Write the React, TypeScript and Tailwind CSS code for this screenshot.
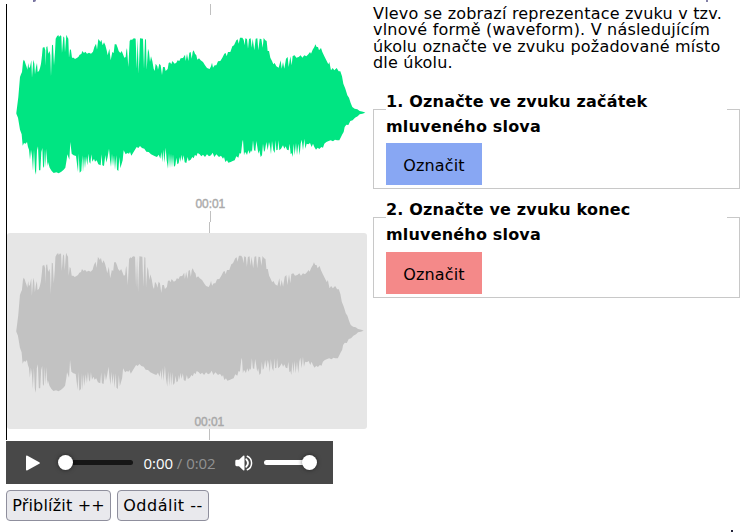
import React from "react";

// Envelope samples as flat x,y pairs, three units to a pixel.
const upper: number[] = [
  50,337,56,290,61,230,64,222,67,215,70,185,72,178,75,182,78,192,81,200,83,208,86,188,88,203,91,200,95,180,97,232,101,178,104,190,106,222,109,200,112,188,114,215,118,212,121,203,124,190,127,165,129,142,134,140,137,150,138,196,140,140,143,138,146,160,150,152,152,165,154,228,157,133,160,135,163,195,166,155,168,115,172,108,176,104,178,110,182,105,185,108,187,158,191,108,194,112,196,156,200,103,204,112,206,115,208,172,211,146,214,150,217,172,222,172,226,176,230,174,236,170,240,163,245,161,248,152,253,158,257,154,262,160,268,157,274,160,280,154,284,140,289,130,292,148,296,116,299,120,302,125,305,118,309,135,313,126,317,135,321,150,324,165,329,145,333,180,338,155,342,158,345,132,350,132,354,142,357,152,362,158,366,152,370,162,374,172,378,170,380,150,382,143,386,200,390,122,394,117,397,120,399,116,403,114,408,115,411,205,414,114,417,220,421,114,430,115,433,205,436,116,439,118,441,208,445,145,448,155,451,185,454,168,458,182,462,205,465,212,468,190,473,198,475,208,479,190,483,195,487,224,490,200,495,200,498,212,504,206,507,188,511,186,515,192,518,182,525,190,530,187,534,180,539,182,
  543,174,550,173,556,163,558,182,562,160,566,182,569,157,573,155,576,175,579,155,582,150,586,160,590,165,593,178,598,174,603,180,610,185,616,195,622,203,630,206,634,198,637,187,640,202,645,195,650,195,655,183,662,182,668,172,674,160,678,158,681,168,685,155,692,155,698,138,703,135,710,120,714,117,717,130,721,112,728,112,732,118,735,135,737,114,742,116,745,145,748,116,753,114,756,142,759,115,764,150,768,115,773,114,776,150,780,115,785,116,789,142,792,113,797,120,801,122,804,152,808,152,812,172,817,182,821,192,825,188,830,198,837,202,843,180,846,205,850,185,854,205,859,175,864,170,867,200,872,168,876,195,879,167,885,165,890,172,897,170,903,165,908,172,914,165,920,168,926,162,931,155,934,160,939,148,944,140,947,132,951,140,955,140,958,150,964,143,968,155,974,168,980,180,986,192,989,185,994,210,999,203,1004,210,1011,203,1017,213,1022,213,1027,228,1031,250,1037,265,1043,285,1048,292,1053,308,1058,320,1065,325,1073,327,1080,332,1090,334,1097,337,
];
const lower: number[] = [
  50,340,55,352,58,370,61,388,66,402,69,436,73,428,78,430,82,425,85,440,88,448,91,478,94,448,97,468,100,512,103,448,106,512,109,523,112,450,115,438,118,510,122,510,125,455,128,443,130,498,133,503,136,446,138,500,141,445,143,498,145,485,150,502,156,512,162,518,170,516,177,519,185,514,192,508,197,502,201,478,203,462,206,470,209,478,212,425,216,460,222,465,229,467,232,492,235,515,237,460,240,517,245,512,248,465,250,515,253,468,256,504,259,468,263,495,266,460,269,485,272,490,275,462,278,484,283,475,286,484,291,480,296,492,303,495,306,462,308,495,313,497,317,464,320,487,324,470,328,445,331,478,334,500,337,460,340,498,343,465,346,508,350,465,352,508,356,512,359,470,362,504,366,490,369,480,372,450,378,462,383,458,388,460,391,455,395,466,400,458,405,450,411,440,416,443,421,437,427,443,434,445,440,454,447,455,454,462,460,465,466,468,472,470,477,463,482,475,485,455,488,486,491,448,494,488,498,442,501,480,505,505,508,458,511,504,514,460,517,502,520,462,523,500,527,495,530,472,533,492,537,489,
  540,470,542,485,545,463,548,482,552,465,555,486,560,488,564,470,567,482,573,478,578,470,582,474,586,463,590,468,594,458,600,462,605,468,610,463,616,470,622,462,628,468,634,465,639,457,644,470,650,462,658,470,664,466,670,475,673,470,677,485,682,480,686,487,693,485,699,482,705,480,710,468,716,472,720,458,724,460,728,425,730,418,733,465,736,455,739,458,742,464,746,450,750,460,754,450,757,455,760,420,763,450,767,452,770,422,773,440,776,460,779,450,783,470,787,465,790,430,793,455,796,450,800,425,804,450,808,425,811,438,814,462,817,422,821,450,825,458,828,420,830,450,834,448,836,420,839,450,844,445,850,435,854,445,858,438,862,448,867,450,870,430,873,462,876,458,879,470,882,430,885,465,889,428,892,465,896,430,900,465,903,430,906,418,910,450,914,415,917,445,921,430,926,432,931,428,936,440,940,430,944,440,949,448,954,442,959,446,965,440,970,442,974,430,980,425,987,422,993,420,1000,423,1006,418,1012,420,1019,420,1024,410,1028,402,1032,395,1035,380,1040,373,1046,374,1052,362,1059,360,1066,352,1074,348,1080,342,1088,340,1097,337,
];

function toPairs(flat: number[]): string[] {
  const pairs: string[] = [];
  for (let i = 0; i < flat.length; i += 2) pairs.push(`${flat[i]},${flat[i + 1]}`);
  return pairs;
}

const envelope = [...toPairs(upper), ...toPairs(lower).reverse()].join(" ");

function Waveform({ className, viewBox }: { className: string; viewBox: string }) {
  return (
    <svg className={className} viewBox={viewBox} preserveAspectRatio="none">
      <polygon points={envelope} />
    </svg>
  );
}

function Tick({ className }: { className: string }) {
  return <div className={`w-px bg-[#c0c0c0] ${className}`} />;
}

function TimeLabel({ className }: { className: string }) {
  return (
    <div className={`font-['Liberation_Sans',sans-serif] text-[12px] leading-[12px] tracking-[-0.1px] [-webkit-text-stroke:0.4px_currentColor] ${className}`}>
      00:01
    </div>
  );
}

function Player() {
  return (
    <div className="flex h-[43px] w-[327px] items-center bg-[#484848]">
      <svg className="ml-5 h-4 w-[14px] shrink-0 fill-white" viewBox="0 0 14 16">
        <path d="M0 1.5Q0 0 1.5.7L13.3 7.2Q14.5 8 13.3 8.8L1.5 15.3Q0 16 0 14.5Z" />
      </svg>
      <div className="ml-[17.5px] flex w-[75.5px] shrink-0 items-center">
        <div className="z-10 h-[15px] w-[15px] shrink-0 rounded-full bg-white shadow-[0_0_4px_rgba(0,0,0,0.5)]" />
        <div className="-ml-1 h-[5px] grow rounded-r-full bg-[#161616]" />
      </div>
      <div className="ml-[10.5px] w-[75px] shrink-0 whitespace-nowrap pt-px font-['Open_Sans',sans-serif] text-[15px] leading-5 tracking-[-0.05px] text-[#929292]">
        <span className="text-white">0:00</span> / 0:02
      </div>
      <svg className="ml-4 h-4 w-[18px] shrink-0" viewBox="0 0 18 16" fill="none">
        <path d="M1.5 4.8H4L8.2.8Q9.5 0 9.5 1.5V14.5Q9.5 16 8.2 15.2L4 11.2H1.5Q.3 11.2.3 9.8V6.2Q.3 4.8 1.5 4.8Z" fill="#fff" />
        <path d="M11.3 4.3Q14.6 8 11.3 11.7" stroke="#fff" strokeWidth="1.9" strokeLinecap="round" />
        <path d="M12.3 1.3C18 3.8 18 12.2 12.3 14.7" stroke="#fff" strokeWidth="1.5" strokeLinecap="round" />
      </svg>
      <div className="ml-[11px] flex w-[53px] shrink-0 items-center">
        <div className="-mr-1 h-[5px] grow rounded-l-full bg-white" />
        <div className="h-[15px] w-[15px] shrink-0 rounded-full bg-white shadow-[0_0_4px_rgba(0,0,0,0.5)]" />
      </div>
    </div>
  );
}

function ZoomButton({ children, className }: { children: React.ReactNode; className: string }) {
  return (
    <button className={`flex h-[31px] items-center justify-center whitespace-nowrap rounded border border-[#8f8f9d] bg-[#e9e9ed] pt-px text-[16px] ${className}`}>
      {children}
    </button>
  );
}

interface TaskProps {
  title: React.ReactNode;
  className: string;
  legendClass: string;
  buttonClass: string;
}

function Task({ title, className, legendClass, buttonClass }: TaskProps) {
  return (
    <fieldset className={`w-[367px] border border-[#c8c8c8] px-3 ${className}`}>
      <legend className={`w-full text-[16px] font-bold leading-[24.5px] tracking-[0.18px] ${legendClass}`}>{title}</legend>
      <button className={`flex h-[42px] w-24 items-center justify-center pt-[3px] text-[16px] tracking-[0.15px] ${buttonClass}`}>
        Označit
      </button>
    </fieldset>
  );
}

export default function App() {
  return (
    <div className="relative flex h-[532px] w-[753px] overflow-hidden bg-white font-['DejaVu_Sans',Verdana,sans-serif] text-black">
      <div className="ml-[6px] w-[361px] shrink-0 pt-1">
        <div className="h-[437px]">
          <div className="h-[436px] border-l border-black">
            <Tick className="ml-[203px] h-[11px]" />
            <Waveform className="block h-[180px] w-[360px] fill-[#00e582]" viewBox="22 44 1080 540" />
            <TimeLabel className="ml-[188.5px] mt-[3px] text-[#aaaaaa]" />
            <Tick className="ml-[203px] mt-px h-[11px]" />
            <Tick className="ml-[202px] h-[11px]" />
            <div className="h-[196px] overflow-hidden rounded-[3px] bg-[#e6e6e6]">
              <Waveform className="block h-[180px] w-[360px] fill-[#c2c2c2]" viewBox="22 44 1085 540" />
              <TimeLabel className="ml-[187.5px] mt-[3px] text-[#a8a8a8]" />
            </div>
            <Tick className="ml-[202px] h-[11px]" />
          </div>
        </div>
        <Player />
        <div className="mt-[6px] flex gap-[6px]">
          <ZoomButton className="w-[105px] tracking-[0.18px]">Přiblížit ++</ZoomButton>
          <ZoomButton className="w-[92px] tracking-[0.5px]">Oddálit --</ZoomButton>
        </div>
      </div>

      <div className="ml-[6px] w-[374px] shrink-0 pt-[6px]">
        <p className="whitespace-nowrap text-[16px] leading-[16.25px] tracking-[0.2px]">
          Vlevo se zobrazí reprezentace zvuku v tzv.
          <br />
          vlnové formě (waveform). V následujícím
          <br />
          úkolu označte ve zvuku požadované místo
          <br />
          dle úkolu.
        </p>
        <Task
          className="mt-[9px] h-[109px]"
          legendClass="pt-[10px]"
          buttonClass="mt-1 bg-[#88a7f3]"
          title={<>1. Označte ve zvuku začátek<br />mluveného slova</>}
        />
        <Task
          className="-mt-[2px] h-[111px]"
          legendClass="pt-[11px]"
          buttonClass="mt-[5px] bg-[#f48989]"
          title={<>2. Označte ve zvuku konec<br />mluveného slova</>}
        />
      </div>

      <div className="absolute left-[33px] top-0 h-[2px] w-[3px] rounded-br bg-[#77739f]" />
      <div className="absolute left-[706px] top-0 h-[2px] w-[2px] bg-[#8481a8]" />
      <div className="absolute left-[731px] top-[530px] h-[2px] w-[2px] bg-[#25253b]" />
    </div>
  );
}
